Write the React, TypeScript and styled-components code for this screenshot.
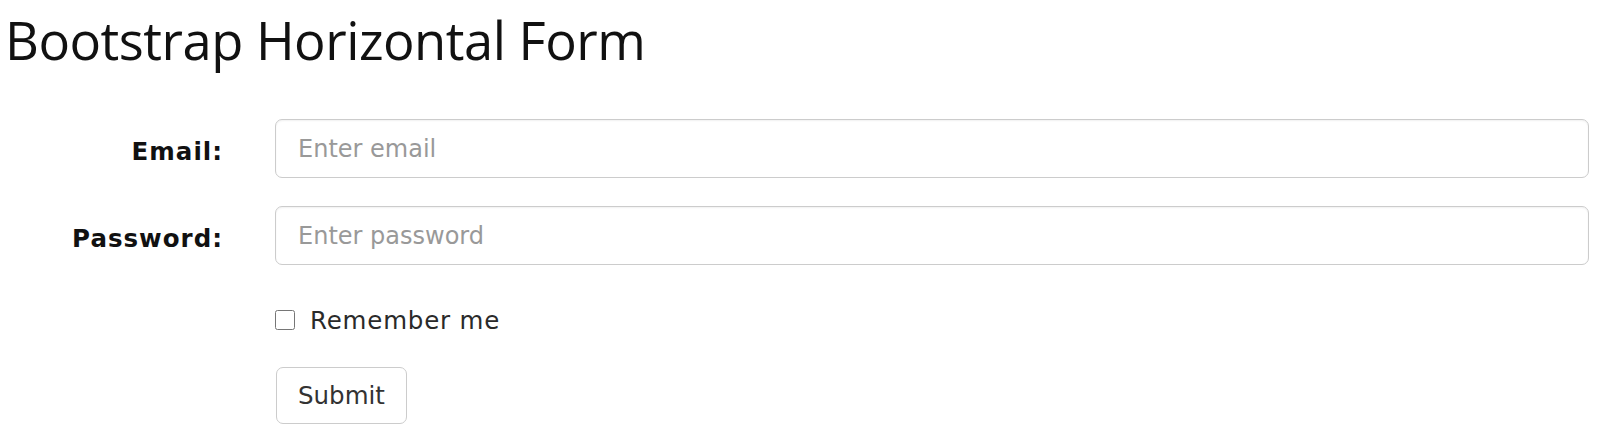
import styled, { createGlobalStyle } from "styled-components";

const GlobalStyle = createGlobalStyle`
  html, body {
    margin: 0;
    padding: 0;
    background: #fff;
  }
  body {
    font-family: "DejaVu Sans", Verdana, sans-serif;
    font-size: 24.5px;
    color: #333;
  }
`;

const Page = styled.div`
  width: 1607px;
  height: 437px;
  overflow: hidden;
`;

const Title = styled.h2`
  margin: 0;
  padding: 10px 0 0 5px;
  font-family: "Open Sans", "Noto Sans", sans-serif;
  font-weight: 400;
  font-size: 52.5px;
  line-height: 60px;
  color: #111;
  letter-spacing: -0.5px;
`;

const Form = styled.form`
  margin-top: 49px;
`;

const Row = styled.div<{ $gap: number; $height?: number }>`
  display: grid;
  grid-template-columns: 222px 1314px;
  column-gap: 53px;
  align-items: center;
  margin-bottom: ${(p) => p.$gap}px;
  ${(p) => (p.$height ? `height: ${p.$height}px;` : "")}
`;

const Label = styled.label`
  justify-self: end;
  font-weight: 700;
  font-size: 24.5px;
  letter-spacing: 1px;
  margin-right: -1px;
  color: #111;
  padding-top: 6px;
`;

const Input = styled.input`
  box-sizing: border-box;
  height: 59px;
  width: 100%;
  padding: 0 22px;
  border: 1.5px solid #ccc;
  border-radius: 7px;
  font-family: inherit;
  font-size: 24px;
  color: #555;
  box-shadow: inset 0 1px 2px rgba(0, 0, 0, 0.06);
  outline: none;

  &::placeholder {
    color: #999;
  }
`;

const Spacer = styled.div``;

const CheckRow = styled.label`
  display: flex;
  align-items: center;
  gap: 15px;
  font-size: 24.5px;
  letter-spacing: 0.8px;
  color: #2a2a2a;
`;

const Check = styled.input`
  margin: 0;
  width: 20px;
  height: 20px;
`;

const Button = styled.button`
  justify-self: start;
  box-sizing: border-box;
  height: 57px;
  padding: 0 21px;
  margin-left: 1px;
  background: #fff;
  border: 1.5px solid #ccc;
  border-radius: 7px;
  font-family: inherit;
  font-size: 24.5px;
  color: #333;
`;

export default function App() {
  return (
    <Page>
      <GlobalStyle />
      <Title>Bootstrap Horizontal Form</Title>
      <Form onSubmit={(e) => e.preventDefault()}>
        <Row $gap={28}>
          <Label htmlFor="email">Email:</Label>
          <Input id="email" type="email" placeholder="Enter email" />
        </Row>
        <Row $gap={28}>
          <Label htmlFor="pwd">Password:</Label>
          <Input id="pwd" type="password" placeholder="Enter password" />
        </Row>
        <Row $gap={20} $height={54}>
          <Spacer />
          <CheckRow>
            <Check type="checkbox" />
            Remember me
          </CheckRow>
        </Row>
        <Row $gap={0}>
          <Spacer />
          <Button type="submit">Submit</Button>
        </Row>
      </Form>
    </Page>
  );
}
